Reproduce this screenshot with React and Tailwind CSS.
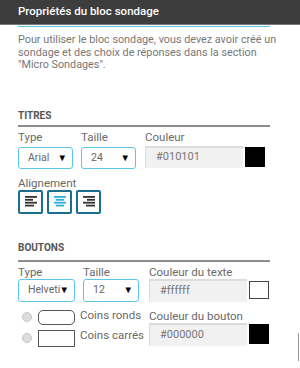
const AlignIcon = ({ kind, color }) => {
  const lines = {
    left: [
      [0, 12],
      [0, 8],
      [0, 12],
      [0, 9],
    ],
    center: [
      [0, 12],
      [2, 10],
      [0, 12],
      [2, 10],
    ],
    right: [
      [0, 12],
      [4, 12],
      [0, 12],
      [3, 12],
    ],
  }[kind];
  return (
    <svg width="12" height="11" viewBox="0 0 12 11">
      {lines.map(([x1, x2], i) => (
        <rect key={i} x={x1} y={i * 2.9} width={x2 - x1} height="1.8" fill={color} />
      ))}
    </svg>
  );
};

const Select = ({ value, w, h }) => (
  <div
    className={`${w} ${h} flex items-center pl-[9px] pr-[5px] border-[1.5px] border-[#5cc6ea] rounded-[3px] bg-white overflow-hidden`}
  >
    <span className="flex-1 min-w-0 text-[10.5px] text-[#666] overflow-hidden whitespace-nowrap">{value}</span>
    <span className="shrink-0 text-[9.5px] text-black leading-none">▼</span>
  </div>
);

const ColorField = ({ value, swatch, h, swatchH }) => (
  <div className="flex items-center gap-[2px]">
    <div
      className={`w-[98px] ${h} bg-[#f1f1f1] border-t-2 border-l border-[#dcdcdc] flex items-center pl-[10px] text-[11px] text-[#777]`}
    >
      {value}
    </div>
    <div className={`w-[20px] ${swatchH} ${swatch}`} />
  </div>
);

const Label = ({ children, className = "" }) => (
  <div className={`text-[11.5px] leading-[14px] text-[#6a6a6a] ${className}`}>{children}</div>
);

export default function App() {
  return (
    <div className="w-[300px] h-[368px] bg-white overflow-hidden relative font-['Roboto',sans-serif]">
      {/* Header */}
      <div className="h-[25px] bg-[#3d3d3d] border-b border-[#7a7a7a] flex items-center pl-[18px]">
        <span className="text-white text-[11.5px] font-medium">Propriétés du bloc sondage</span>
      </div>
      <div className="mx-[18px] w-[252px] h-[2px] border-x border-b-[1.5px] border-[#5cc6ea] rounded-b-[3px]" />

      {/* Description */}
      <p className="mt-[7px] px-[18px] text-[10.8px] leading-[12.5px] text-[#777]">
        Pour utiliser le bloc sondage, vous devez avoir créé un sondage et des choix de réponses dans la section
        "Micro Sondages".
      </p>

      {/* Titres */}
      <div className="mx-[18px] w-[252px] mt-[38px]">
        <div className="text-[10px] font-bold leading-[12px] text-[#555] pb-[3px] border-b-2 border-[#8c8c8c]">
          TITRES
        </div>
        <div className="flex mt-[3px]">
          <div className="w-[63px]">
            <Label>Type</Label>
            <div className="mt-[3px]">
              <Select value="Arial" w="w-[55px]" h="h-[22px]" />
            </div>
          </div>
          <div className="w-[64px]">
            <Label>Taille</Label>
            <div className="mt-[3px]">
              <Select value="24" w="w-[55px]" h="h-[22px]" />
            </div>
          </div>
          <div>
            <Label>Couleur</Label>
            <div className="mt-[2px]">
              <ColorField value="#010101" swatch="bg-black" h="h-[22px]" swatchH="h-[20px]" />
            </div>
          </div>
        </div>
        <Label className="mt-[7px]">Alignement</Label>
        <div className="flex gap-[4px]">
          {["left", "center", "right"].map((k) => (
            <div
              key={k}
              className="w-[25px] h-[24px] border-2 border-[#1b6f8e] rounded-[2px] flex items-center justify-center"
            >
              <AlignIcon kind={k} color={k === "center" ? "#2aaee0" : "#333"} />
            </div>
          ))}
        </div>
      </div>

      {/* Boutons */}
      <div className="mx-[18px] w-[252px] mt-[28px]">
        <div className="text-[10px] font-bold leading-[12px] text-[#555] pb-[6px] border-b-2 border-[#8c8c8c]">
          BOUTONS
        </div>
        <div className="flex mt-[3px]">
          <div className="w-[65px]">
            <Label>Type</Label>
            <Select value="Helvetica" w="w-[57px]" h="h-[23px]" />
          </div>
          <div className="w-[66px]">
            <Label>Taille</Label>
            <Select value="12" w="w-[56px]" h="h-[23px]" />
          </div>
          <div>
            <Label>Couleur du texte</Label>
            <ColorField
              value="#ffffff"
              swatch="bg-white border-[1.5px] border-[#444]"
              h="h-[23px]"
              swatchH="h-[18px]"
            />
          </div>
        </div>
        <div className="flex mt-[7px]">
          <div className="w-[131px] pl-[4px] flex flex-col gap-[5px] pt-[1px]">
            <div className="flex items-center">
              <div className="w-[10px] h-[10px] rounded-full bg-[#ddd] border border-[#c4c4c4]" />
              <div className="ml-[6px] w-[37px] h-[15px] border-[1.5px] border-[#555] rounded-[5px]" />
              <span className="ml-[5px] text-[11.5px] text-[#6a6a6a] leading-[14px] -mt-[4px]">Coins ronds</span>
            </div>
            <div className="flex items-center">
              <div className="w-[10px] h-[10px] rounded-full bg-[#ddd] border border-[#c4c4c4]" />
              <div className="ml-[6px] w-[37px] h-[17px] border-[1.5px] border-[#555]" />
              <span className="ml-[5px] text-[11.5px] text-[#6a6a6a] leading-[14px] -mt-[6px]">Coins carrés</span>
            </div>
          </div>
          <div>
            <Label>Couleur du bouton</Label>
            <ColorField value="#000000" swatch="bg-black" h="h-[23px]" swatchH="h-[20px]" />
          </div>
        </div>
      </div>
      <div className="absolute right-[1px] top-[333px] w-[1px] h-[28px] bg-[#999]" />
    </div>
  );
}
